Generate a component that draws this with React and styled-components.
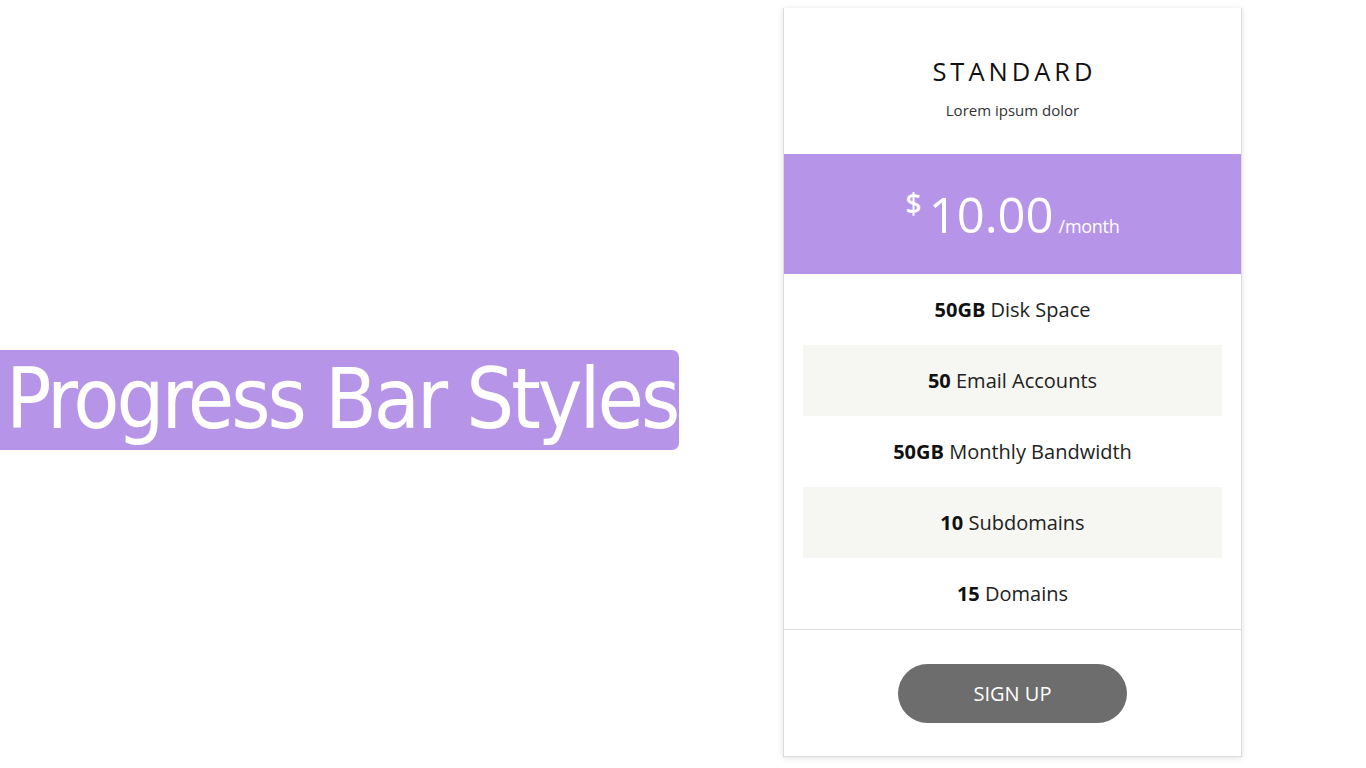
import React from "react";
import styled, { createGlobalStyle } from "styled-components";

const GlobalStyle = createGlobalStyle`
  html, body {
    margin: 0;
    padding: 0;
    background: #ffffff;
  }
  body {
    font-family: "Open Sans", "Noto Sans", sans-serif;
    color: #222;
  }
`;

const Page = styled.div`
  width: 1366px;
  height: 768px;
  display: flex;
  overflow: hidden;
`;

const Left = styled.div`
  width: 783px;
  display: flex;
  align-items: center;
  padding-top: 32px;
  box-sizing: border-box;
`;

const Banner = styled.h1`
  margin: 0;
  width: 679px;
  height: 100px;
  box-sizing: border-box;
  background: #b695e8;
  border-radius: 0 7px 7px 0;
  color: #fff;
  font-family: "DejaVu Sans Condensed", "Open Sans", sans-serif;
  font-weight: 400;
  font-size: 84px;
  letter-spacing: -3px;
  line-height: 98px;
  padding-left: 6px;
  white-space: nowrap;
`;

const Card = styled.div`
  width: 459px;
  margin-top: 8px;
  height: 749px;
  box-sizing: border-box;
  border: 1px solid #dcdcdc;
  border-top: none;
  box-shadow: 0 1px 6px rgba(0, 0, 0, 0.12);
  display: flex;
  flex-direction: column;
  background: #fff;
`;

const Head = styled.div`
  height: 146px;
  display: flex;
  flex-direction: column;
  align-items: center;
  padding-top: 46px;
  box-sizing: border-box;
`;

const Title = styled.div`
  font-size: 25.5px;
  font-weight: 500;
  letter-spacing: 4px;
  margin-right: -4px;
  color: #111;
  line-height: 34px;
`;

const Sub = styled.div`
  margin-top: 12px;
  font-size: 15px;
  color: #333;
`;

const PriceBand = styled.div`
  height: 120px;
  background: #b695e8;
  color: #fff;
  display: flex;
  justify-content: center;
  align-items: center;
  box-sizing: border-box;
`;

const Currency = styled.span`
  font-size: 28px;
  font-weight: 600;
  align-self: flex-start;
  margin-top: 30px;
  margin-right: 7px;
`;

const Amount = styled.span`
  font-size: 49px;
  font-weight: 400;
  line-height: 1;
`;

const Period = styled.span`
  font-size: 18px;
  align-self: flex-end;
  margin-bottom: 36px;
  margin-left: 5px;
  letter-spacing: -0.3px;
`;

const Features = styled.ul`
  list-style: none;
  margin: 0;
  padding: 0 19px;
`;

const Feature = styled.li`
  height: 71px;
  display: flex;
  align-items: center;
  justify-content: center;
  font-size: 20px;
  color: #222;
  background: ${(p) => (p.$shaded ? "#f6f6f2" : "transparent")};
`;

const Label = styled.span`
  white-space: pre;
  b {
    font-weight: 700;
    color: #111;
  }
`;

const Foot = styled.div`
  flex: 1;
  border-top: 1px solid #ddd;
  display: flex;
  justify-content: center;
  padding-top: 34px;
  box-sizing: border-box;
`;

const Button = styled.button`
  width: 229px;
  height: 59px;
  border: 0;
  border-radius: 30px;
  background: #6d6d6d;
  color: #fff;
  font-family: "Open Sans", sans-serif;
  font-size: 20px;
  cursor: pointer;
`;

const features = [
  ["50GB", "Disk Space"],
  ["50", "Email Accounts"],
  ["50GB", "Monthly Bandwidth"],
  ["10", "Subdomains"],
  ["15", "Domains"],
];

export default function App() {
  return (
    <Page>
      <GlobalStyle />
      <Left>
        <Banner>Progress Bar Styles</Banner>
      </Left>
      <Card>
        <Head>
          <Title>STANDARD</Title>
          <Sub>Lorem ipsum dolor</Sub>
        </Head>
        <PriceBand>
          <Currency>$</Currency>
          <Amount>10.00</Amount>
          <Period>/month</Period>
        </PriceBand>
        <Features>
          {features.map(([num, label], i) => (
            <Feature key={label} $shaded={i % 2 === 1}>
              <Label>
                <b>{num}</b> {label}
              </Label>
            </Feature>
          ))}
        </Features>
        <Foot>
          <Button>SIGN UP</Button>
        </Foot>
      </Card>
    </Page>
  );
}
